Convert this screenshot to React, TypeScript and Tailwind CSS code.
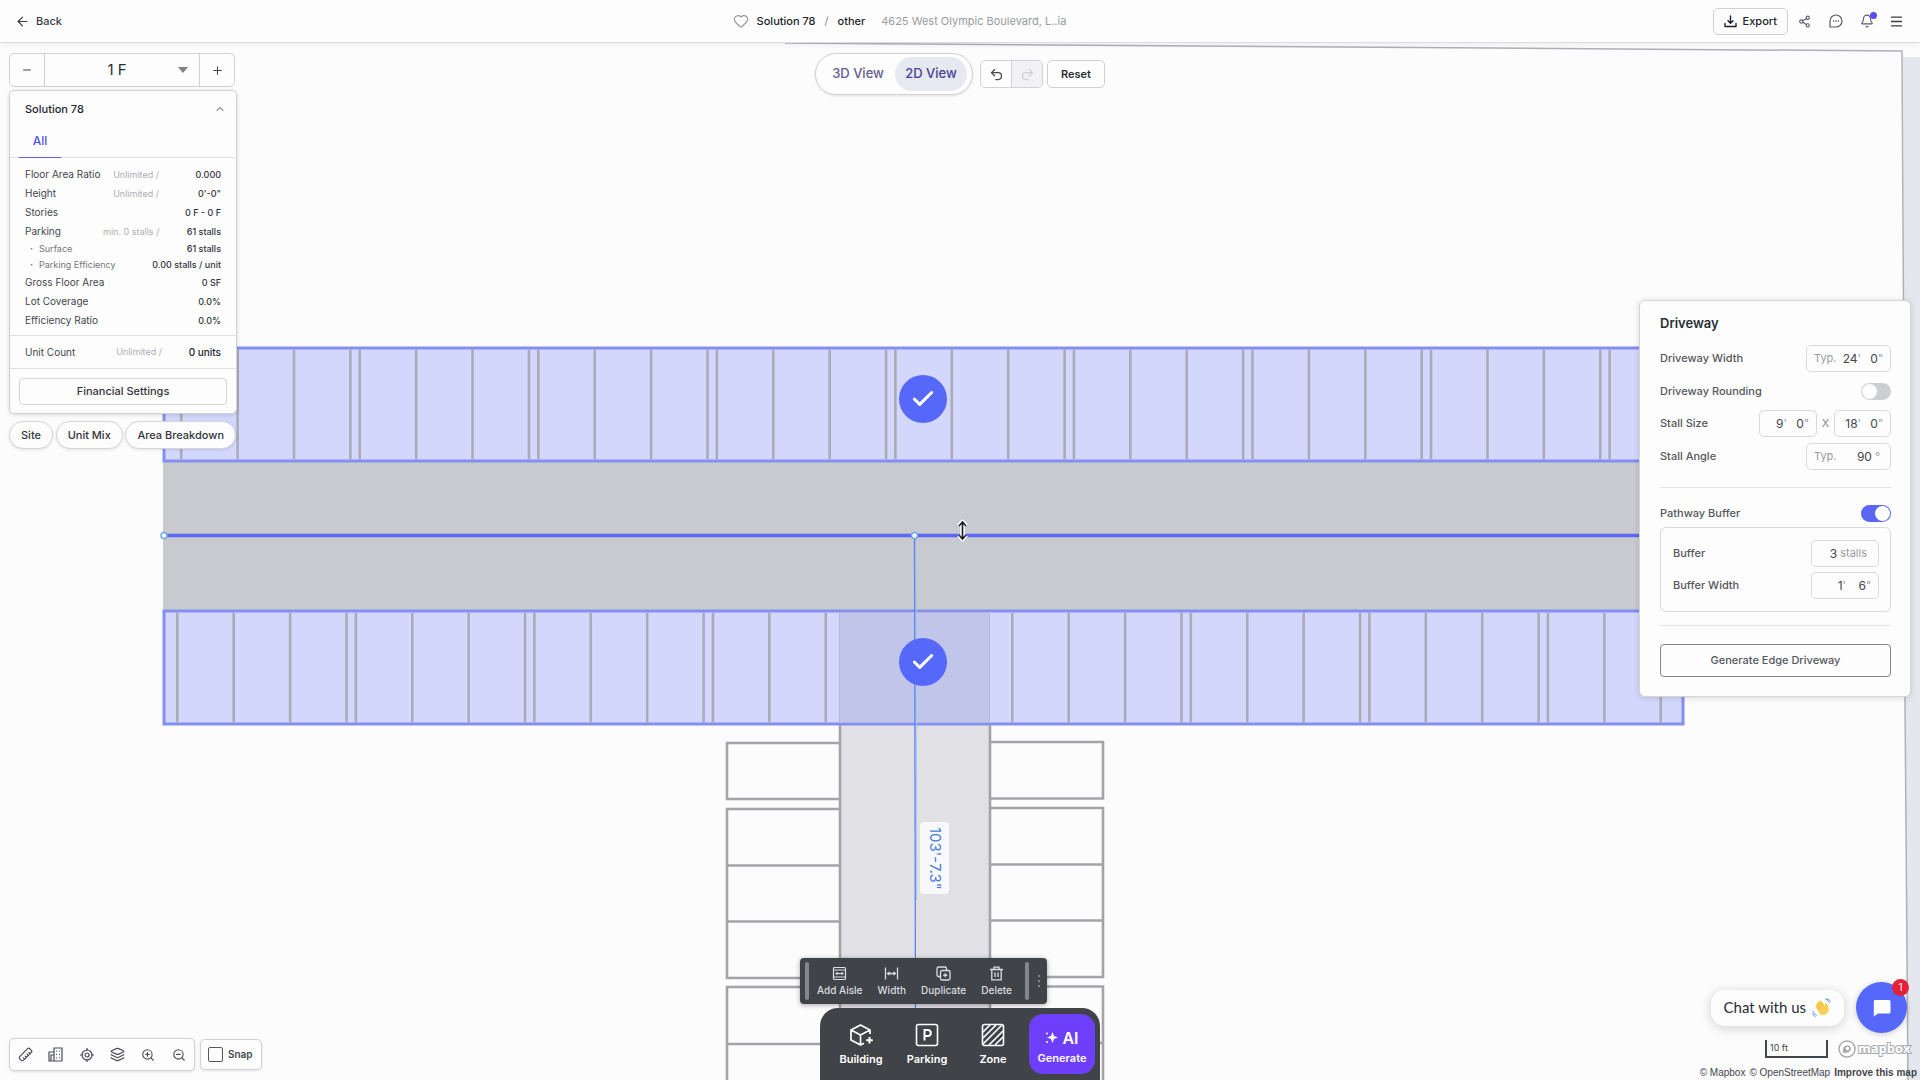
import { useState, type ReactNode } from 'react';
import {
  ArrowLeft,
  Bell,
  Check,
  ChevronUp,
  Heart,
  Layers,
  Menu,
  Minus,
  Plus,
  Redo2,
  Ruler,
  Share2,
  Undo2,
  ZoomIn,
  ZoomOut,
} from 'lucide-react';

const STALL = 56.4;
const GROUP = 178.55;

function stallLines(start: number, from: number, to: number) {
  const lines: number[] = [];
  for (let group = start; group < to; group += GROUP) {
    for (let i = 0; i < 4; i++) {
      const x = group + i * STALL;
      if (x > from && x < to) lines.push(x);
    }
  }
  return lines;
}

const upperLines = stallLines(181.2, 164, 1683);
const lowerLines = [...stallLines(177.3, 164, 840), ...stallLines(1012.3, 990, 1683)];

function SitePlan() {
  return (
    <svg
      className="absolute inset-0 h-full w-full"
      viewBox="0 0 1920 1080"
      preserveAspectRatio="xMidYMid slice"
      aria-hidden="true"
    >
      <rect width="1920" height="1080" fill="#fcfcfc" />
      <path d="M1903 57H1920V1080H1907L1905 620Z" fill="#e4e8ee" />
      <path d="M785 43L1902 51L1904 390L1905 700L1908 1080" fill="none" stroke="#b0b1b6" strokeWidth="1.5" />

      <rect x="840" y="611" width="150" height="469" fill="#e0e0e5" />
      <rect x="163" y="460" width="1520" height="151" fill="#c9cacf" />

      <g fill="#d4d7fc" stroke="#848ff2" strokeWidth="3">
        <rect x="164" y="348" width="1519" height="113" />
        <rect x="164" y="611" width="1519" height="113" />
      </g>
      <g stroke="#a9abb8" strokeWidth="2.6">
        {upperLines.map((x) => (
          <line key={x} x1={x} x2={x} y1="349.5" y2="459.5" />
        ))}
        {lowerLines.map((x) => (
          <line key={x} x1={x} x2={x} y1="612.5" y2="722.5" />
        ))}
      </g>
      <rect x="839.5" y="612.5" width="150" height="110" fill="#c2c5ea" stroke="#b3b6dd" strokeWidth="1" />

      <g fill="none" stroke="#a3a4a8" strokeWidth="2.6">
        <path d="M840 725V1080M990 725V1080" />
        <path d="M840 743H727V799H840M840 809H727V978H840M727 865.5H840M727 921.5H840" />
        <path d="M990 742H1103V798.5H990M990 808H1103V977H990M990 864.5H1103M990 920.5H1103" />
        <path d="M840 987H727V1080M727 1044H840M990 986.5H1103V1080M990 1043H1103" />
      </g>

      <path d="M163 535.5H1683" stroke="#5b67f3" strokeWidth="3.4" />
      <path d="M916 536L916.5 900" stroke="#9fcdec" strokeWidth="1" />
      <path d="M914.5 536L915.5 1010" stroke="#5d82ee" strokeWidth="1.3" />
      <g fill="#fff" stroke="#6ea8ef" strokeWidth="1.5">
        <circle cx="164" cy="535.5" r="3" />
        <circle cx="914.5" cy="535.5" r="3" />
      </g>

      <path
        d="M962.5 523V538M959 526L962.5 522L966 526M959 535L962.5 539L966 535"
        fill="none"
        stroke="#fff"
        strokeWidth="4.5"
        strokeLinejoin="round"
      />
      <path d="M962.5 523V538M959 526L962.5 522L966 526M959 535L962.5 539L966 535" fill="none" stroke="#1b1c22" strokeWidth="1.6" />
    </svg>
  );
}

function TopBar() {
  return (
    <header className="relative z-10 grid h-[43px] grid-cols-[1fr_auto_1fr] items-center border-b border-[#dcdde0] bg-[#fdfdfd] pr-4 pl-[15px] shadow-[0_2px_6px_rgba(0,0,0,0.06)]">
      <a href="#back" className="flex items-center gap-[6px] text-[11px] font-medium text-[#3b3d44]">
        <ArrowLeft className="size-[15px]" strokeWidth={1.9} />
        Back
      </a>
      <div className="flex items-center pr-[120px] text-[11px]">
        <button type="button" aria-label="Favorite" className="mr-[8px] text-[#93959c]">
          <Heart className="size-[16px]" strokeWidth={1.7} />
        </button>
        <span className="font-medium text-[#1d1f2b]">Solution 78</span>
        <span className="mx-[9px] text-[#85878e]">/</span>
        <span className="font-medium text-[#1d1f2b]">other</span>
        <span className="ml-[16px] text-[#9a9ba1]">4625 West Olympic Boulevard, L..ia</span>
      </div>
      <div className="flex items-center justify-end">
        <button
          type="button"
          className="mr-[10px] flex h-[27px] items-center gap-[6px] rounded-[5px] border border-[#cfd0d4] px-[10px] text-[11px] font-medium text-[#1d1f2b]"
        >
          <svg className="size-[13px]" viewBox="0 0 13 13" fill="none" stroke="currentColor" strokeWidth="1.4" strokeLinecap="round" strokeLinejoin="round">
            <path d="M1 8.5V11.5H12V8.5M6.5 1V8M4 5.8L6.5 8.2L9 5.8" />
          </svg>
          Export
        </button>
        <button type="button" aria-label="Share" className="mr-[18px] text-[#5b5d65]">
          <Share2 className="size-[13px]" />
        </button>
        <button type="button" aria-label="Comments" className="mr-[17px] text-[#5b5d65]">
          <svg className="size-[14px]" viewBox="0 0 14 14" fill="none" stroke="currentColor" strokeWidth="1.2">
            <path d="M1 13V7A6 6 0 1 1 7 13Z" strokeLinejoin="round" />
            <path d="M4 7H5.2M6.4 7H7.6M8.8 7H10" strokeWidth="1.4" />
          </svg>
        </button>
        <button type="button" aria-label="Notifications" className="relative mr-[15px] text-[#5b5d65]">
          <Bell className="size-[14px]" strokeWidth={1.9} />
          <span className="absolute -top-[2px] -right-[3px] size-[7px] rounded-full bg-[#5a4cf0]" />
        </button>
        <button type="button" aria-label="Menu" className="text-[#3b3d44]">
          <Menu className="size-[15px]" strokeWidth={2.2} />
        </button>
      </div>
    </header>
  );
}

const metrics = [
  { label: 'Floor Area Ratio', limit: 'Unlimited /', value: '0.000' },
  { label: 'Height', limit: 'Unlimited /', value: '0\'-0"' },
  { label: 'Stories', value: '0 F - 0 F' },
  { label: 'Parking', limit: 'min. 0 stalls /', value: '61 stalls' },
  { label: 'Surface', value: '61 stalls', sub: true },
  { label: 'Parking Efficiency', value: '0.00 stalls / unit', sub: true },
  { label: 'Gross Floor Area', value: '0 SF' },
  { label: 'Lot Coverage', value: '0.0%' },
  { label: 'Efficiency Ratio', value: '0.0%' },
];

function SummaryColumn() {
  return (
    <aside className="absolute top-[53px] left-[9px] z-10 w-[228px]">
      <div className="mr-[2px] flex h-[34px] items-stretch rounded-[5px] border border-[#cfd0d4] bg-[#fdfdfd] text-[#44464d]">
        <button type="button" aria-label="Previous floor" className="flex w-[34px] items-center justify-center">
          <Minus className="size-[12px]" />
        </button>
        <div className="relative flex-1 border-x border-[#cfd0d4]">
          <select aria-label="Floor" className="h-full w-full appearance-none pr-[10px] text-center text-[15px] text-[#2b2d35] [text-align-last:center]">
            <option>1 F</option>
          </select>
          <span className="pointer-events-none absolute top-[13px] right-[11px] border-x-[5px] border-t-[6px] border-x-transparent border-t-[#808188]" />
        </div>
        <button type="button" aria-label="Next floor" className="flex w-[34px] items-center justify-center">
          <Plus className="size-[13px]" />
        </button>
      </div>

      <section className="mt-[3px] rounded-[5px] border border-[#d0d1d5] bg-[#fdfdfd] shadow-[0_1px_4px_rgba(0,0,0,0.14)]">
        <div className="flex h-[36px] items-center justify-between pr-[10px] pl-[15px]">
          <h2 className="text-[11px] font-medium text-[#23252d]">Solution 78</h2>
          <button type="button" aria-label="Collapse" className="text-[#44464d]">
            <ChevronUp className="size-3" />
          </button>
        </div>
        <div className="flex border-b border-[#dfe0e3] px-[9px]">
          <button type="button" className="-mb-px h-[31px] w-[42px] border-b border-[#5b62f2] pb-[2px] text-xs font-medium text-[#5450ea]">
            All
          </button>
        </div>
        <table className="mx-auto mt-[7px] w-[196px] table-fixed text-[9px] whitespace-nowrap text-[#44464d]">
          <colgroup>
            <col className="w-[78px]" />
            <col />
            <col className="w-[62px]" />
          </colgroup>
          <tbody>
            {metrics.map((row) => (
              <tr key={row.label} className={row.sub ? 'h-4' : 'h-[19px]'}>
                <th
                  scope="row"
                  className={
                    row.sub ? 'pl-[5px] text-left font-normal text-[#75777e]' : 'text-left text-[10px] font-normal'
                  }
                >
                  {row.sub && <span className="mr-[6px] font-bold">·</span>}
                  {row.label}
                </th>
                {row.limit && <td className="text-right text-[#adaeb3]">{row.limit}</td>}
                <td colSpan={row.limit ? 1 : 2} className="text-right font-medium text-[#33353d]">
                  {row.value}
                </td>
              </tr>
            ))}
          </tbody>
        </table>
        <div className="mt-[5px] flex h-[34px] items-center border-y border-[#dfe0e3] px-[15px] text-[10px]">
          <span className="text-[#44464d]">Unit Count</span>
          <span className="ml-auto text-[9px] text-[#adaeb3]">Unlimited /</span>
          <span className="w-[59px] text-right font-medium text-[#23252d]">0 units</span>
        </div>
        <div className="px-[9px] pt-[8px] pb-[8px]">
          <button type="button" className="h-[27px] w-full rounded-[4px] border border-[#d4d5d9] text-[11px] font-medium text-[#33353d]">
            Financial Settings
          </button>
        </div>
      </section>

      <div className="mt-[7px] mr-px flex justify-between">
        {['Site', 'Unit Mix', 'Area Breakdown'].map((label) => (
          <button
            key={label}
            type="button"
            className="h-[28px] rounded-full border border-[#d4d5d9] bg-[#fdfdfd] px-[11px] text-[11px] font-medium text-[#33353d] shadow-[0_1px_3px_rgba(0,0,0,0.1)]"
          >
            {label}
          </button>
        ))}
      </div>
    </aside>
  );
}

function ViewControls() {
  return (
    <div className="absolute top-[53px] left-1/2 z-10 flex -translate-x-1/2 items-center">
      <div className="flex h-[42px] items-center rounded-full border border-[#d0d1d5] bg-[#fdfdfd] px-[5px] text-[13px] font-medium text-[#625e92] shadow-[0_1px_3px_rgba(0,0,0,0.1)]">
        <button type="button" className="h-[34px] w-[74px] rounded-full">3D View</button>
        <button type="button" className="h-[34px] w-[72px] rounded-full bg-[#e6e9f0] text-[#4b3f96]">2D View</button>
      </div>
      <div className="ml-[7px] flex h-[28px] overflow-hidden rounded-[5px] border border-[#d0d1d5] bg-[#fdfdfd]">
        <button type="button" aria-label="Undo" className="flex w-[31px] items-center justify-center border-r border-[#d0d1d5] text-[#44464d]">
          <Undo2 className="size-[15px]" />
        </button>
        <button type="button" aria-label="Redo" disabled className="flex w-[30px] items-center justify-center bg-[#f2f2f4] text-[#cfd0d4]">
          <Redo2 className="size-[15px]" />
        </button>
      </div>
      <button type="button" className="ml-1 h-[28px] w-[58px] rounded-[5px] border border-[#d0d1d5] bg-[#fdfdfd] text-[11px] font-semibold text-[#2b2d35]">
        Reset
      </button>
    </div>
  );
}

function Field({ prefix, className, children }: { prefix?: string; className: string; children: ReactNode }) {
  return (
    <div className={`flex h-[27px] items-center justify-end rounded-[5px] border border-[#d8d9dc] pr-[7px] text-[11px] font-normal ${className}`}>
      {prefix && <span className="mr-auto pl-[7px] text-[#9a9ba1]">{prefix}</span>}
      {children}
    </div>
  );
}

function Unit({ label, value, unit, wide }: { label: string; value: string; unit: string; wide?: boolean }) {
  return (
    <label className="flex items-center text-[#9a9ba1]">
      <input
        aria-label={label}
        defaultValue={value}
        className={`text-right text-xs text-[#44464d] outline-none ${wide ? 'w-[20px]' : 'w-[17px]'}`}
      />
      {unit}
    </label>
  );
}

function Toggle({ label, initial }: { label: string; initial: boolean }) {
  const [on, setOn] = useState(initial);
  return (
    <label className="flex h-[18px] items-center justify-between">
      {label}
      <input type="checkbox" role="switch" checked={on} onChange={() => setOn(!on)} className="peer sr-only" />
      <span className="flex h-[17px] w-[30px] rounded-full bg-[#cdced3] p-px peer-checked:justify-end peer-checked:bg-[#5a67f6]">
        <span className="size-[15px] rounded-full bg-white" />
      </span>
    </label>
  );
}

function DrivewayPanel() {
  return (
    <section className="absolute top-[300px] right-[9px] z-10 w-[272px] rounded-[6px] border border-[#d4d5d9] bg-[#fdfdfd] pt-3 pr-[19px] pb-[19px] pl-5 text-[11px] font-medium text-[#55575e] shadow-[0_1px_6px_rgba(0,0,0,0.14)]">
      <h2 className="text-[13px] leading-5 font-semibold text-[#2b2d35]">Driveway</h2>
      <div className="mt-3 flex items-center justify-between">
        Driveway Width
        <Field prefix="Typ." className="w-[85px]">
          <Unit label="Driveway width feet" value="24" unit={"'"} />
          <Unit label="Driveway width inches" value="0" unit={'"'} />
        </Field>
      </div>
      <div className="mt-[10px]">
        <Toggle label="Driveway Rounding" initial={false} />
      </div>
      <div className="mt-[10px] flex items-center">
        <span className="mr-auto">Stall Size</span>
        <Field className="w-[58px]">
          <Unit label="Stall width feet" value="9" unit={"'"} />
          <Unit label="Stall width inches" value="0" unit={'"'} />
        </Field>
        <span className="w-[17px] text-center font-normal text-[#85878e]">X</span>
        <Field className="w-[57px]">
          <Unit label="Stall length feet" value="18" unit={"'"} />
          <Unit label="Stall length inches" value="0" unit={'"'} />
        </Field>
      </div>
      <div className="mt-[6px] flex items-center justify-between">
        Stall Angle
        <Field prefix="Typ." className="w-[85px]">
          <Unit label="Stall angle" value="90" unit={'\u00a0°'} wide />
          <span className="w-[3px]" />
        </Field>
      </div>
      <hr className="mt-[17px] border-[#e4e5e8]" />
      <div className="mt-4">
        <Toggle label="Pathway Buffer" initial />
      </div>
      <div className="mt-[5px] flex flex-col gap-[5px] rounded-[6px] border border-[#d8d9dc] py-3 pr-[11px] pl-3">
        <div className="flex items-center justify-between">
          Buffer
          <Field className="w-[68px]">
            <Unit label="Buffer stalls" value="3" unit={'\u00a0stalls'} />
            <span className="w-[4px]" />
          </Field>
        </div>
        <div className="flex items-center justify-between">
          Buffer Width
          <Field className="w-[68px]">
            <Unit label="Buffer width feet" value="1" unit={"'"} />
            <Unit label="Buffer width inches" value="6" unit={'"'} wide />
          </Field>
        </div>
      </div>
      <hr className="mt-[13px] border-[#e4e5e8]" />
      <button type="button" className="mt-[18px] h-[33px] w-full rounded-[4px] border border-[#83858b] text-[11px] font-medium">
        Generate Edge Driveway
      </button>
    </section>
  );
}

function MapTools() {
  const tool = 'flex size-[30px] items-center justify-center text-[#4b4d54]';
  return (
    <div className="absolute bottom-[9px] left-[9px] z-10 flex items-center gap-[5px]">
      <div className="flex h-[33px] w-[186px] items-center justify-between rounded-[5px] border border-[#d0d1d5] bg-[#fdfdfd] shadow-[0_1px_3px_rgba(0,0,0,0.1)]">
        <button type="button" aria-label="Measure" className={tool}>
          <Ruler className="size-[15px] rotate-90" strokeWidth={1.9} />
        </button>
        <button type="button" aria-label="Surrounding buildings" className={tool}>
          <svg className="size-[15px]" viewBox="0 0 15 15" fill="none" stroke="currentColor" strokeWidth="1.2">
            <path d="M1 14V5H6V1H14V14Z M3 14V8H6V14M6 5V8" />
            <path d="M8 4H9M11 4H12M8 7.5H9M11 7.5H12M8 11H9M11 11H12" />
          </svg>
        </button>
        <button type="button" aria-label="Recenter" className={tool}>
          <svg className="size-[14px]" viewBox="0 0 14 14" fill="none" stroke="currentColor" strokeWidth="1.2">
            <circle cx="7" cy="7" r="5" />
            <circle cx="7" cy="7" r="2" />
            <path d="M7 0V3M7 11V14M0 7H3M11 7H14" />
          </svg>
        </button>
        <button type="button" aria-label="Layers" className={tool}>
          <Layers className="size-[15px]" strokeWidth={1.9} />
        </button>
        <button type="button" aria-label="Zoom in" className={tool}>
          <ZoomIn className="size-[14px]" strokeWidth={1.9} />
        </button>
        <button type="button" aria-label="Zoom out" className={tool}>
          <ZoomOut className="size-[14px]" strokeWidth={1.9} />
        </button>
      </div>
      <label className="flex h-[31px] items-center gap-[5px] rounded-[5px] border border-[#d0d1d5] bg-[#fdfdfd] pr-2 pl-[7px] text-[10px] font-semibold text-[#44464d] shadow-[0_1px_3px_rgba(0,0,0,0.1)]">
        <input type="checkbox" className="size-[15px] appearance-none rounded-[2px] border border-[#55575e] checked:bg-[#5a67f6]" />
        Snap
      </label>
    </div>
  );
}

function SelectionMenu() {
  const item = 'flex flex-col items-center gap-[3px] text-[10px] leading-3 font-medium text-[#dcdde0]';
  return (
    <div className="absolute bottom-[76px] left-[800px] z-10 flex h-[46px] w-[247px] items-center rounded-[4px] bg-[#404448] px-[5px] shadow-[0_1px_5px_rgba(0,0,0,0.35)]">
      <span className="h-[38px] w-1 rounded-full bg-[#85878b]" />
      <div className="flex flex-1 justify-between pr-[13px] pl-2">
        <button type="button" className={item}>
          <svg className="size-[15px]" viewBox="0 0 15 15" fill="none" stroke="currentColor" strokeWidth="1.2">
            <rect x="1.5" y="1.5" width="12" height="12" rx="1" />
            <path d="M1.5 4H13.5M1.5 11H13.5" />
            <path d="M4 7.5H11" />
            <path d="M3 7.5L5.5 5.8V9.2ZM12 7.5L9.5 5.8V9.2Z" fill="currentColor" stroke="none" />
          </svg>
          Add Aisle
        </button>
        <button type="button" className={item}>
          <svg className="size-[15px]" viewBox="0 0 15 15" fill="none" stroke="currentColor" strokeWidth="1.3">
            <path d="M1.5 1.5V13.5M13.5 1.5V13.5M4 7.5H11" />
            <path d="M2.5 7.5L5.5 5.2V9.8ZM12.5 7.5L9.5 5.2V9.8Z" fill="currentColor" stroke="none" />
          </svg>
          Width
        </button>
        <button type="button" className={item}>
          <svg className="size-[15px]" viewBox="0 0 15 15" fill="none" stroke="currentColor" strokeWidth="1.3">
            <rect x="4.5" y="4.5" width="9.5" height="9.5" rx="1.5" />
            <path d="M4.5 10.5H2.5A1.5 1.5 0 0 1 1 9V2.5A1.5 1.5 0 0 1 2.5 1H9A1.5 1.5 0 0 1 10.5 2.5V4.5M9.25 7.25V11.25M7.25 9.25H11.25" />
          </svg>
          Duplicate
        </button>
        <button type="button" className={item}>
          <svg className="size-[15px]" viewBox="0 0 15 15" fill="none" stroke="currentColor" strokeWidth="1.3">
            <path d="M1 3.5H14M5 3.5V1.2H10V3.5M2.8 3.5V13.8H12.2V3.5M6 6.5V11M9 6.5V11" />
          </svg>
          Delete
        </button>
      </div>
      <span className="h-[38px] w-1 rounded-full bg-[#85878b]" />
      <button type="button" aria-label="More" className="ml-[7px] flex w-[6px] flex-col items-center gap-[3px]">
        <span className="size-[2px] bg-[#85878b]" />
        <span className="size-[2px] bg-[#85878b]" />
        <span className="size-[2px] bg-[#85878b]" />
      </button>
    </div>
  );
}

function CreateBar() {
  const item = 'flex w-[66px] flex-col items-center gap-[5px] text-[11px] leading-[14px] font-semibold text-white';
  return (
    <div className="absolute bottom-0 left-1/2 z-10 flex h-[72px] w-[280px] -translate-x-1/2 items-center rounded-t-[18px] bg-[#404448] pr-[5px] pl-2">
      <button type="button" className={item}>
        <svg className="size-[24px]" viewBox="0 0 24 24" fill="none" stroke="currentColor" strokeWidth="1.7" strokeLinejoin="round">
          <path d="M21 11V7L11.5 2L2 7V17L11.5 22L15 20.2M2 7L11.5 12L21 7M11.5 12V22" />
          <path d="M20.5 14V20.5M17.2 17.2H23.8" strokeWidth="2" />
        </svg>
        Building
      </button>
      <button type="button" className={item}>
        <svg className="size-[24px]" viewBox="0 0 24 24" fill="none" stroke="currentColor" strokeWidth="1.6">
          <rect x="1.5" y="1.5" width="21" height="21" rx="2" />
          <path d="M9.5 17.5V7H12.8A3 3 0 0 1 12.8 13H9.5" strokeWidth="2" />
        </svg>
        Parking
      </button>
      <button type="button" className={item}>
        <svg className="size-[24px]" viewBox="0 0 24 24" fill="none" stroke="currentColor" strokeWidth="1.6">
          <rect x="1.5" y="1.5" width="21" height="21" rx="2" />
          <path d="M2 9L9 2M2 15L15 2M2 21L21 2M8 22L22 8M14 22L22 14" />
        </svg>
        Zone
      </button>
      <button
        type="button"
        className="ml-auto flex h-[60px] w-[66px] flex-col items-center justify-center gap-[3px] rounded-[14px] bg-[#6d3ffa] pt-1 text-[11px] leading-[14px] font-semibold text-white"
      >
        <span className="flex items-center gap-1 text-base leading-5">
          <svg className="size-[13px]" viewBox="0 0 13 13" fill="currentColor">
            <path d="M7.5 1L9 5L13 6.5L9 8L7.5 12L6 8L2 6.5L6 5Z" />
            <circle cx="2" cy="2.5" r="1" />
            <circle cx="2" cy="11" r="1" />
          </svg>
          AI
        </span>
        Generate
      </button>
    </div>
  );
}

function CornerWidgets() {
  return (
    <>
      <div className="absolute right-[13px] bottom-[47px] z-10 flex items-center gap-3">
        <button type="button" className="flex h-[36px] items-center gap-[6px] rounded-[14px] bg-[#fdfdfd] px-[13px] font-[Lato,sans-serif] text-[15px] text-[#2b2d35] shadow-[0_2px_12px_rgba(0,0,0,0.18)]">
          Chat with us
          <svg className="size-[19px]" viewBox="0 0 19 19" fill="none">
            <path
              d="M4 9L7.5 15.5Q10 18 13.5 16.5Q17.5 14.5 16.5 10L15 5.5Q14 4 13 6L13.2 8L9.5 3Q8 2 7.5 3.5L6 4Q4.5 4.5 5 6Q3 6.5 4 9Z"
              fill="#f9cf55"
            />
            <path d="M7.5 4L11 9M5.5 6.5L9 11M4.5 9L7.5 12.5" stroke="#e3a93b" strokeWidth=".7" />
            <path d="M13 1Q16.5 1.5 17.5 5M14.5 .5Q17.5 1 18.5 3.5M1 13Q1.5 16.5 5 17.5M.5 15.5Q1 18 3.5 18.5" stroke="#67a3dd" strokeWidth="1" />
          </svg>
        </button>
        <button type="button" aria-label="Open chat" className="relative flex size-[51px] items-center justify-center rounded-full bg-[#5668fa] shadow-[0_1px_6px_rgba(0,0,0,0.2)]">
          <svg className="size-[18px]" viewBox="0 0 18 18" fill="#fff">
            <path d="M2 1H16Q17.5 1 17.5 2.5V13Q17.5 14.5 16 14.5H5L.8 17.5V2.5Q.8 1 2 1Z" />
          </svg>
          <span className="absolute -top-[3px] -right-[2px] flex size-[17px] items-center justify-center rounded-full bg-[#e4203a] text-[10px] text-white">1</span>
        </button>
      </div>
      <div className="absolute right-[3px] bottom-0 z-10 flex flex-col items-end">
        <div className="flex items-center">
          <div className="mr-[10px] h-[18px] w-[63px] border-2 border-t-0 border-[#44464d] pl-[3px] text-[9px] leading-[16px] text-[#44464d]">10 ft</div>
          <svg className="h-[18px] w-[79px]" viewBox="0 0 79 18" role="img" aria-label="Mapbox logo">
            <circle cx="9" cy="9" r="8" fill="#fff" stroke="#a9abb0" strokeWidth="1.5" />
            <path d="M5 13Q4 7 8 5.5Q12 4.5 13 8Q13.5 13 5 13Z" fill="#a9abb0" />
            <circle cx="9.5" cy="8.5" r="1.7" fill="#fff" />
            <text
              x="20"
              y="13"
              fontSize="13"
              fontWeight="700"
              fontFamily="Open Sans, sans-serif"
              fill="#fff"
              stroke="#a9abb0"
              strokeWidth="2"
              paintOrder="stroke"
            >
              mapbox
            </text>
          </svg>
        </div>
        <p className="mt-[6px] flex h-4 items-center gap-1 font-['Liberation_Sans',sans-serif] text-[10px] text-[#44464d]">
          <a href="#mapbox">© Mapbox</a>
          <a href="#osm">© OpenStreetMap</a>
          <a href="#improve" className="font-bold">Improve this map</a>
        </p>
      </div>
    </>
  );
}

function SideToggle({ className, label }: { className: string; label: string }) {
  return (
    <button type="button" aria-label={label} className={`absolute flex size-[48px] items-center justify-center rounded-full bg-[#5668fa] text-white ${className}`}>
      <Check className="size-[26px]" strokeWidth={2.8} />
    </button>
  );
}

export default function App() {
  return (
    <div className="relative min-h-screen overflow-hidden bg-[#fcfcfc] font-[Inter,sans-serif]">
      <SitePlan />
      <SideToggle className="top-[375px] left-[899px]" label="Stalls above aisle" />
      <SideToggle className="top-[638px] left-[899px]" label="Stalls below aisle" />
      <span className="absolute top-[822px] left-[920px] flex h-[72px] w-[29px] items-center justify-center rounded-[4px] bg-[#f8f9fb] text-[15px] text-[#4a7be0] [writing-mode:vertical-rl]">
        103'-7.3"
      </span>
      <TopBar />
      <SummaryColumn />
      <ViewControls />
      <DrivewayPanel />
      <MapTools />
      <SelectionMenu />
      <CreateBar />
      <CornerWidgets />
    </div>
  );
}
